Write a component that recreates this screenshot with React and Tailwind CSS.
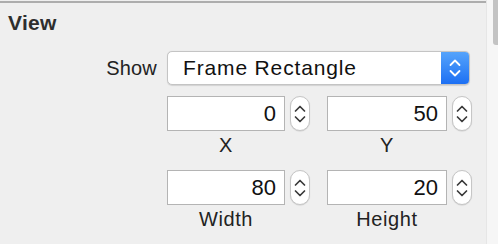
import React from "react";

const font = { fontFamily: '"Liberation Sans", Arial, sans-serif' };

function Chevrons({ color = "#333", w = 1.6, h = 26 }) {
  return (
    <svg width="14" height={h} viewBox="0 0 14 26" fill="none">
      <path d="M2.5 10 L7 5.5 L11.5 10" stroke={color} strokeWidth={w} strokeLinecap="round" strokeLinejoin="round" />
      <path d="M2.5 16 L7 20.5 L11.5 16" stroke={color} strokeWidth={w} strokeLinecap="round" strokeLinejoin="round" />
    </svg>
  );
}

function NumberField({ value, label, width }) {
  return (
    <div className="flex flex-col">
      <div className="flex items-center gap-[5px]">
        <div
          className="h-[35px] bg-white border border-[#b4b4b4] flex items-center justify-end pr-[8px] text-[22px] text-[#111]"
          style={{ width }}
        >
          {value}
        </div>
        <div className="w-[20px] h-[35px] rounded-full bg-white border border-[#c6c6c6] flex items-center justify-center shadow-[0_0.5px_1px_rgba(0,0,0,0.15)]">
          <Chevrons color="#3a3a3a" w={1.7} />
        </div>
      </div>
      <div className="mt-[4px] text-[20px] leading-[20px] tracking-[0.6px] text-[#222] text-center" style={{ width }}>
        {label}
      </div>
    </div>
  );
}

export default function App() {
  return (
    <div className="w-[498px] h-[244px] flex bg-[#efefef] overflow-hidden" style={font}>
      <div className="w-[486px] pt-[1px] flex flex-col">
        <div className="border-t-2 border-[#adadad]" />
        <div className="mt-[8px] ml-[8px] text-[21px] leading-[24px] font-bold text-[#2e2e2e] tracking-[0.3px]">View</div>
        <div className="mt-[16px] flex items-center">
          <div className="w-[167px] pr-[10px] text-right text-[20px] text-[#222] tracking-[0.2px]">Show</div>
          <div className="w-[303px] h-[34px] flex bg-white border border-[#c4c4c4] rounded-[5px] overflow-hidden shadow-[0_0.5px_1px_rgba(0,0,0,0.12)]">
            <div className="flex-1 flex items-center pl-[15px] text-[21px] tracking-[0.85px] text-[#111]">
              Frame Rectangle
            </div>
            <div className="w-[28px] h-full flex items-center justify-center bg-gradient-to-b from-[#55a3fb] to-[#1c6ff3]">
              <Chevrons color="#fff" w={1.8} />
            </div>
          </div>
        </div>
        <div className="mt-[11px] ml-[167px] flex gap-[17px]">
          <NumberField value="0" label="X" width={118} />
          <NumberField value="50" label="Y" width={120} />
        </div>
        <div className="mt-[15px] ml-[167px] flex gap-[17px]">
          <NumberField value="80" label="Width" width={118} />
          <NumberField value="20" label="Height" width={120} />
        </div>
      </div>
      <div className="flex-1 bg-[#f6f6f6] border-l border-[#e6e6e6] flex justify-end">
        <div className="w-[5px] h-[45px] bg-[#c3c3c3] rounded-bl-[3px]" />
      </div>
    </div>
  );
}
